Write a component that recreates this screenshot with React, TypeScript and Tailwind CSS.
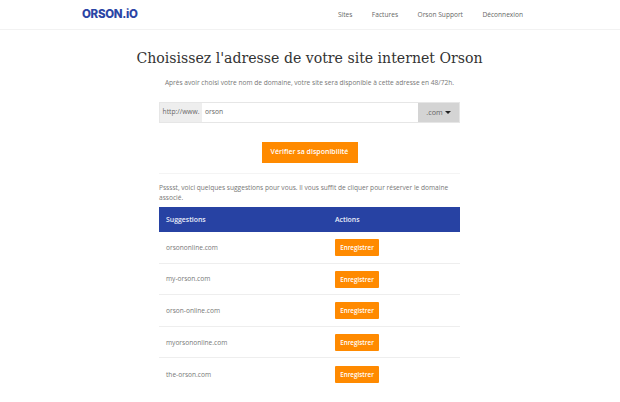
const rows = ["orsononline.com", "my-orson.com", "orson-online.com", "myorsononline.com", "the-orson.com"];
const nav = ["Sites", "Factures", "Orson Support", "Déconnexion"];

export default function App() {
  return (
    <div className="h-[402px] w-[620px] overflow-hidden bg-white font-['Open_Sans',sans-serif] text-[#777]">
      <header className="flex h-[30px] items-center justify-between border-b border-[#f2f2f2] pl-[82px] pr-[97px]">
        <div className="font-['Inter',sans-serif] text-[11.5px] font-extrabold tracking-[-0.3px] text-[#2b45a5]">ORSON.iO</div>
        <nav className="flex gap-[19.5px] text-[6.6px] text-[#666]">
          {nav.map((n) => (
            <span key={n}>{n}</span>
          ))}
        </nav>
      </header>
      <main className="ml-[159px] flex w-[301px] flex-col">
        <h1 className="-mx-10 mt-[18px] whitespace-nowrap text-center font-['DejaVu_Serif',serif] text-[14.1px] leading-[20px] text-[#333]">
          Choisissez l'adresse de votre site internet Orson
        </h1>
        <p className="mt-[10px] whitespace-nowrap text-center text-[6.6px] leading-[10px]">
          Après avoir choisi votre nom de domaine, votre site sera disponible à cette adresse en 48/72h.
        </p>
        <div className="mt-[14px] flex h-[21px] border border-[#e6e6e6] text-[6.7px]">
          <span className="flex w-[42px] items-center justify-center bg-[#eee] text-[#666]">http://www.</span>
          <span className="flex flex-1 items-center pl-[3px] text-[#666]">orson</span>
          <span className="flex w-[41px] items-center justify-center gap-[2px] bg-[#d4d4d4] text-[7.2px] text-[#666]">
            .com
            <span className="h-0 w-0 border-x-[3px] border-t-[3px] border-x-transparent border-t-[#222]" />
          </span>
        </div>
        <div className="mt-[19px] flex justify-center">
          <button className="h-[21px] w-[96px] bg-[#ff8a00] text-[7px] font-semibold text-white">Vérifier sa disponibilité</button>
        </div>
        <hr className="mt-[10px] border-[#f4f4f4]" />
        <p className="mt-[9px] text-[6.6px] leading-[10px]">
          Psssst, voici quelques suggestions pour vous. Il vous suffit de cliquer pour réserver le domaine associé.
        </p>
        <div className="mt-[4px] grid h-[25px] grid-cols-[169px_1fr] items-center bg-[#2742a3] pl-[7px] pt-px text-[6.9px] font-semibold text-[#e8ecf8]">
          <span>Suggestions</span>
          <span>Actions</span>
        </div>
        {rows.map((r, i) => (
          <div key={r} className={`grid h-[31.6px] grid-cols-[169px_1fr] items-center pl-[7px] pt-px text-[6.6px] text-[#777] ${i < 4 ? "border-b border-[#eee]" : ""}`}>
            <span>{r}</span>
            <button className="h-[17px] w-[44px] rounded-[1px] bg-[#ff8a00] text-[6.3px] font-semibold text-white">Enregistrer</button>
          </div>
        ))}
      </main>
    </div>
  );
}
